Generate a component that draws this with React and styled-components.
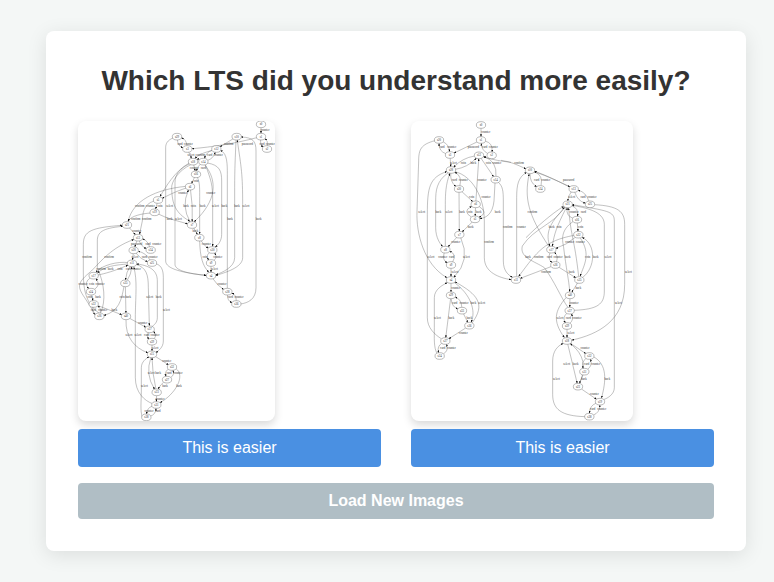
import React from "react";
import styled, { createGlobalStyle } from "styled-components";

const GlobalStyle = createGlobalStyle`
  *, *::before, *::after { box-sizing: border-box; }
  body {
    margin: 0;
    background: #f4f7f6;
    color: #333;
    font-family: "Liberation Sans", Arial, sans-serif;
    font-size: 16px;
  }
`;

const Page = styled.main`
  display: flex;
  justify-content: center;
  align-items: center;
  min-height: 100vh;
  padding: 24px 28px 24px 46px;
`;

const Card = styled.section`
  width: 100%;
  max-width: 700px;
  padding: 32px;
  background: #fff;
  border-radius: 8px;
  box-shadow: 0 4px 20px rgba(0, 0, 0, 0.1);
`;

const Title = styled.h1`
  margin: 0 0 22px;
  font-size: 28px;
  line-height: 36px;
  font-weight: 700;
  text-align: center;
`;

const Choices = styled.div`
  display: grid;
  grid-template-columns: 1fr 1fr;
  gap: 30px;
  margin-bottom: 16px;
`;

const Choice = styled.div`
  display: flex;
  flex-direction: column;
  align-items: flex-start;
  gap: 8px;
`;

const Diagram = styled.svg`
  display: block;
  max-width: 100%;
  height: 300px;
  border-radius: 8px;
  background: #fff;
  box-shadow: 0 4px 8px rgba(0, 0, 0, 0.15);
`;

const Edge = styled.path`
  fill: none;
  stroke: #666;
  stroke-width: 1.2;
`;

const State = styled.ellipse`
  fill: #fff;
  stroke: #555;
  stroke-width: 1.2;
`;

const DiagramText = styled.text`
  font-family: "Liberation Serif", serif;
  font-size: 9px;
  text-anchor: middle;
  fill: #333;
`;

const Button = styled.button`
  width: 100%;
  padding: 0 16px;
  border: 0;
  border-radius: 4px;
  color: #fff;
  font-family: inherit;
  font-size: 16px;
  line-height: ${(p) => (p.$secondary ? "36px" : "38px")};
  font-weight: ${(p) => (p.$secondary ? 700 : 400)};
  background: ${(p) => (p.$secondary ? "#b0bec5" : "#4a90e2")};
  cursor: pointer;
`;

/* Nodes are [x, y, name]; links are [from, to, bend]; labels are [y, x, text, x, text, ...]. */
const compact = {
  title: "First labelled transition system",
  width: 591,
  nodes: [
    [549, 10, "s0"], [549, 47, "s1"], [567, 84, "s2"], [476, 47, "s10"], [415, 84, "s12"],
    [297, 47, "s29"], [328, 84, "s3"], [345, 122, "s18"], [376, 122, "s14"], [354, 160, "s16"],
    [336, 197, "s6"], [240, 237, "s5"], [230, 274, "s19"], [147, 312, "s21"], [180, 350, "s13"],
    [167, 388, "s20"], [218, 387, "s34"], [162, 427, "s11"], [222, 426, "s25"], [47, 464, "s17"],
    [39, 512, "s24"], [47, 549, "s22"], [64, 586, "s26"], [142, 487, "s35"], [144, 586, "s40"],
    [342, 312, "s7"], [364, 350, "s8"], [403, 387, "s30"], [399, 426, "s9"], [399, 464, "s4"],
    [448, 512, "s28"], [475, 549, "s36"], [215, 625, "s37"], [222, 662, "s39"], [222, 700, "s15"],
    [282, 738, "s32"], [267, 776, "s27"], [236, 814, "s23"], [235, 852, "s31"], [205, 889, "s38"],
  ],
  links: [
    [0, 1, 0], [1, 2, 7], [2, 1, 7], [3, 4, 0], [5, 6, 8], [6, 5, 8], [6, 7, 0], [4, 8, 7], [8, 4, 7],
    [8, 7, 4], [7, 9, 0], [8, 9, 4], [9, 10, 0], [11, 12, 0], [13, 14, 0], [14, 15, 0], [14, 16, 6],
    [16, 14, 7], [15, 17, 0], [15, 18, 5], [18, 15, 7], [19, 20, 13], [20, 19, 13], [20, 21, 0],
    [21, 22, 8], [22, 21, 8], [21, 24, 0], [17, 23, 4], [23, 17, 4], [23, 24, 0], [24, 32, 0],
    [32, 33, 7], [33, 32, 10], [33, 34, 0], [34, 35, 0], [35, 36, 8], [36, 35, 8], [36, 37, 3],
    [34, 37, 14], [37, 34, -3], [37, 38, 0], [38, 39, 8], [39, 38, 8], [10, 25, -3], [25, 10, -15],
    [25, 26, 0], [26, 27, 4], [27, 28, 9], [28, 27, 9], [28, 29, 0], [29, 30, 4], [30, 31, 8], [31, 30, 8],
  ],
  paths: [
    "M536 50C470 68 400 78 344 83",
    "M285 51C268 58 263 68 263 80V420C263 445 320 456 383 463",
    "M404 88C375 95 360 103 352 111",
    "M325 201C290 212 268 225 254 231",
    "M334 126C290 150 262 200 247 225",
    "M336 128C305 142 291 160 291 185V430C291 448 330 458 383 463",
    "M340 130C298 150 280 185 281 200C282 250 292 275 334 300",
    "M324 196C230 205 165 240 151 299",
    "M228 240C195 250 194 280 193 300L185 338",
    "M218 276C190 278 160 285 151 299",
    "M241 279C265 292 300 300 327 308",
    "M380 131C420 180 415 240 350 301",
    "M358 169C366 185 365 200 365 240V337",
    "M382 131C400 180 404 190 404 240V374",
    "M388 126C425 132 431 150 431 180V340C431 360 420 372 413 377",
    "M448 502V160C448 130 448 98 429 89",
    "M474 57C472 110 470 140 470 200V410C470 440 430 455 415 461",
    "M494 250C494 160 490 140 478 59",
    "M494 250V410C494 440 440 455 415 463",
    "M487 549C510 546 534 535 534 500V90C534 60 525 50 491 48",
    "M365 359C366 410 375 435 391 452",
    "M64 577C20 545 16 500 16 450V370C16 330 40 320 131 313",
    "M68 575C84 540 80 490 58 440V360C58 335 70 322 133 316",
    "M52 580L20 530C-4 495 -2 485 40 450C70 420 100 380 166 356",
    "M234 428C252 434 256 450 256 470V660C256 680 240 690 235 694",
    "M150 429C110 432 80 436 60 455",
    "M60 462C80 458 110 450 148 433",
    "M151 425C120 420 70 433 55 453",
    "M138 496C130 540 122 570 79 583",
    "M224 848C200 840 172 815 172 770V580C173 520 178 480 168 440",
    "M174 430C205 440 211 460 211 500L214 612",
    "M222 617C228 612 238 605 238 590V480C238 455 225 435 177 429",
    "M144 596C142 650 170 680 208 695",
    "M293 742C325 765 290 820 248 844",
    "M193 888C186 870 190 840 190 810V740C190 722 205 712 212 708",
  ],
  labels: [
    [28, 561, "counter"], [68, 552, "card", 577, "counter", 508, "password", 452, "confirm", 306, "card", 331, "counter"],
    [103, 339, "select", 367, "confirm", 395, "card", 421, "counter"], [141, 349, "counter", 376, "card"],
    [180, 354, "coin"], [217, 314, "counter", 398, "counter"],
    [254, 185, "confirm", 217, "counter", 246, "coin", 275, "select", 324, "back", 346, "coin", 374, "back", 412, "select", 439, "back", 477, "back", 504, "select"],
    [293, 173, "confirm", 206, "confirm", 275, "back", 301, "select", 456, "back", 542, "back"],
    [331, 176, "counter", 352, "back"], [369, 176, "password", 210, "card", 236, "counter", 385, "counter"],
    [407, 27, "confirm", 93, "confirm", 171, "select", 199, "card", 225, "counter", 381, "coin", 419, "counter"],
    [445, 69, "confirm", 98, "back", 126, "coin", 166, "card counter", 409, "select"],
    [488, 15, "counter", 41, "coin", 66, "counter", 432, "counter"],
    [529, 36, "coin", 60, "back", 142, "coin back", 215, "select", 242, "back", 457, "card", 483, "counter"],
    [568, 46, "card", 74, "counter", 109, "back", 265, "select"], [605, 194, "counter"],
    [643, 153, "select", 180, "select", 206, "card", 231, "counter"], [681, 231, "select"],
    [719, 266, "counter"], [757, 229, "select back", 273, "card", 300, "counter"],
    [795, 199, "select", 261, "back", 303, "back"], [833, 246, "counter"], [871, 213, "counter", 240, "card"],
  ],
};

const wide = {
  title: "Second labelled transition system",
  width: 666,
  nodes: [
    [210, 12, "s0"], [210, 57, "s1"], [84, 57, "s20"], [117, 102, "s3"], [204, 103, "s12"],
    [242, 103, "s2"], [120, 147, "s28"], [254, 176, "s14"], [144, 204, "s30"], [194, 250, "s6"],
    [192, 295, "s5"], [145, 341, "s7"], [357, 148, "s10"], [388, 204, "s34"], [488, 204, "s13"],
    [537, 250, "s25"], [470, 250, "s21"], [498, 296, "s16"], [502, 341, "s22"], [103, 386, "s8"],
    [120, 432, "s9"], [120, 477, "s4"], [120, 523, "s29"], [153, 569, "s33"], [175, 614, "s36"],
    [103, 660, "s27"], [86, 705, "s24"], [315, 477, "s11"], [421, 386, "s17"], [433, 432, "s26"],
    [505, 477, "s35"], [477, 523, "s40"], [476, 569, "s37"], [468, 615, "s39"], [468, 660, "s18"],
    [535, 705, "s32"], [520, 752, "s31"], [501, 797, "s23"], [567, 842, "s19"], [535, 887, "s38"],
  ],
  links: [
    [0, 1, 0], [1, 5, -12], [5, 1, -8], [1, 3, 0], [2, 3, -8], [3, 2, -10], [3, 6, 0], [6, 4, 8], [4, 6, 8],
    [4, 7, 0], [7, 4, 18], [6, 8, 8], [8, 6, 12], [8, 9, 0], [9, 4, 0], [9, 10, 0], [9, 10, -20],
    [10, 9, -20], [8, 11, 0], [10, 11, 0], [11, 19, 0], [11, 21, -24], [19, 20, 10], [20, 19, 14],
    [20, 21, 0], [21, 22, 0], [22, 23, 9], [23, 22, 9], [23, 24, 0], [22, 25, 0], [24, 25, 0],
    [25, 26, 9], [26, 25, 10], [12, 13, 9], [13, 12, 14], [14, 15, 9], [15, 14, 9],
    [14, 16, 4], [16, 17, -11], [17, 16, -11], [17, 18, 0], [18, 28, -5], [28, 29, 9], [29, 28, 8],
    [29, 27, 0], [29, 30, 0], [30, 31, 0], [31, 32, 0], [32, 33, 9], [33, 32, 9], [33, 34, 0],
    [34, 35, 0], [35, 36, 9], [36, 35, 9], [36, 37, 0], [34, 37, 0], [37, 34, 28], [37, 38, 0],
    [38, 39, 9], [39, 38, 9],
  ],
  paths: [
    "M72 59C30 70 23 85 23 120L18 270C15 340 40 430 106 469",
    "M270 118C300 122 320 132 343 143",
    "M300 124C270 120 250 118 220 108",
    "M132 152C185 165 220 230 220 300V410C220 455 265 470 299 476",
    "M252 186L249 240C245 280 225 290 208 293",
    "M262 184C275 195 277 210 277 240V420C277 450 292 462 303 468",
    "M317 466V230C317 190 322 170 345 155",
    "M92 654C70 640 49 620 49 590V280C49 200 55 170 106 152",
    "M112 155C76 180 74 210 74 240V320C74 350 88 370 94 375",
    "M103 376V250C103 220 104 190 116 159",
    "M129 484C180 520 195 570 181 602",
    "M183 606C225 550 200 520 133 483",
    "M78 697C68 680 70 650 70 620V530C70 505 95 492 107 486",
    "M369 152C410 165 450 185 475 197",
    "M475 197C450 185 410 165 372 151",
    "M414 377C350 280 340 230 354 161",
    "M470 558C450 530 430 480 400 440C370 420 325 410 334 375C370 320 430 310 459 260",
    "M345 350C380 315 420 280 456 257",
    "M489 343C400 360 380 390 324 465",
    "M463 259C410 310 405 340 416 374",
    "M466 260C435 320 430 340 424 374",
    "M503 466C490 350 480 350 473 263",
    "M487 301C445 330 455 360 458 380C465 440 474 480 476 510",
    "M508 351C540 400 520 430 508 464",
    "M514 470C555 440 555 370 515 350",
    "M489 568C560 565 580 550 580 510V310C580 270 520 260 485 253",
    "M577 836C590 832 610 820 610 800V300C610 270 590 270 485 251",
    "M550 251C620 255 641 270 641 310V490C641 600 560 640 484 657",
    "M466 529C430 570 425 600 459 648",
    "M547 707C590 730 585 780 572 829",
    "M523 887C450 885 425 865 425 820V720C425 690 440 675 455 668",
  ],
  labels: [
    [34, 224, "counter"], [79, 93, "card", 122, "counter", 187, "password", 221, "card", 247, "counter"],
    [125, 127, "select", 157, "coin", 187, "back", 232, "coin", 257, "counter", 324, "confirm"],
    [176, 130, "card", 157, "counter", 213, "counter", 377, "card", 404, "counter", 473, "password"],
    [227, 182, "coin", 225, "counter", 482, "select", 516, "card", 543, "counter"],
    [273, 32, "select", 82, "back", 114, "select", 153, "back", 177, "coin", 203, "back", 260, "back", 364, "confirm", 489, "counter", 517, "card"],
    [318, 179, "back", 290, "confirm", 331, "counter", 422, "back", 444, "coin", 509, "coin"],
    [364, 134, "counter", 234, "confirm", 476, "counter", 508, "counter"],
    [409, 60, "select", 95, "counter", 122, "card", 166, "select", 351, "back", 383, "confirm", 415, "card", 441, "counter", 470, "back", 530, "coin", 554, "back", 591, "select"],
    [454, 132, "select", 405, "confirm", 482, "back", 652, "select"],
    [500, 134, "counter", 502, "back"], [546, 131, "card", 159, "counter", 187, "back", 212, "select", 489, "counter", 622, "select"],
    [591, 79, "select", 121, "back", 175, "back", 447, "select", 472, "card", 498, "counter"],
    [637, 157, "counter", 480, "select"], [682, 95, "card", 121, "counter", 522, "counter"],
    [728, 467, "select", 494, "back", 527, "card", 554, "counter"],
    [774, 436, "select", 519, "back", 589, "back"], [820, 550, "counter"], [865, 545, "card", 572, "counter"],
  ],
};

const RX = 14;
const RY = 10;

function linkPath(from, to, bend) {
  const dx = to[0] - from[0];
  const dy = to[1] - from[1];
  const length = Math.hypot(dx, dy);
  const cx = (from[0] + to[0]) / 2 - (dy / length) * bend * 2;
  const cy = (from[1] + to[1]) / 2 + (dx / length) * bend * 2;
  const rim = (node, pad) => {
    const vx = cx - node[0];
    const vy = cy - node[1];
    const scale = 1 / Math.hypot(vx / (RX + pad), vy / (RY + pad));
    return `${node[0] + vx * scale} ${node[1] + vy * scale}`;
  };
  return `M${rim(from, 0)}Q${cx} ${cy} ${rim(to, 2)}`;
}

function StateGraph({ id, graph }) {
  const paths = graph.links
    .map(([a, b, bend]) => linkPath(graph.nodes[a], graph.nodes[b], bend))
    .concat(graph.paths);
  return (
    <Diagram viewBox={`0 0 ${graph.width} 900`} role="img" aria-label={graph.title}>
      <defs>
        <marker id={id} viewBox="0 0 8 6" refX="5" refY="3" markerWidth="8" markerHeight="6" markerUnits="userSpaceOnUse" orient="auto">
          <path d="M0 0L8 3L0 6Z" fill="#111" />
        </marker>
      </defs>
      {paths.map((d, i) => <Edge key={i} d={d} markerEnd={`url(#${id})`} />)}
      {graph.nodes.map(([x, y, name]) => (
        <g key={name}>
          <State cx={x} cy={y} rx={RX} ry={RY} />
          <DiagramText x={x} y={y + 3}>{name}</DiagramText>
        </g>
      ))}
      {graph.labels.flatMap(([y, ...items]) =>
        items.map((item, i) =>
          i % 2 ? <DiagramText key={`${y}-${i}`} x={items[i - 1]} y={y + 3}>{item}</DiagramText> : null
        )
      )}
    </Diagram>
  );
}

export default function App() {
  return (
    <>
      <GlobalStyle />
      <Page>
        <Card>
          <Title>Which LTS did you understand more easily?</Title>
          <Choices>
            <Choice>
              <StateGraph id="arrow-compact" graph={compact} />
              <Button type="button">This is easier</Button>
            </Choice>
            <Choice>
              <StateGraph id="arrow-wide" graph={wide} />
              <Button type="button">This is easier</Button>
            </Choice>
          </Choices>
          <Button type="button" $secondary>Load New Images</Button>
        </Card>
      </Page>
    </>
  );
}
